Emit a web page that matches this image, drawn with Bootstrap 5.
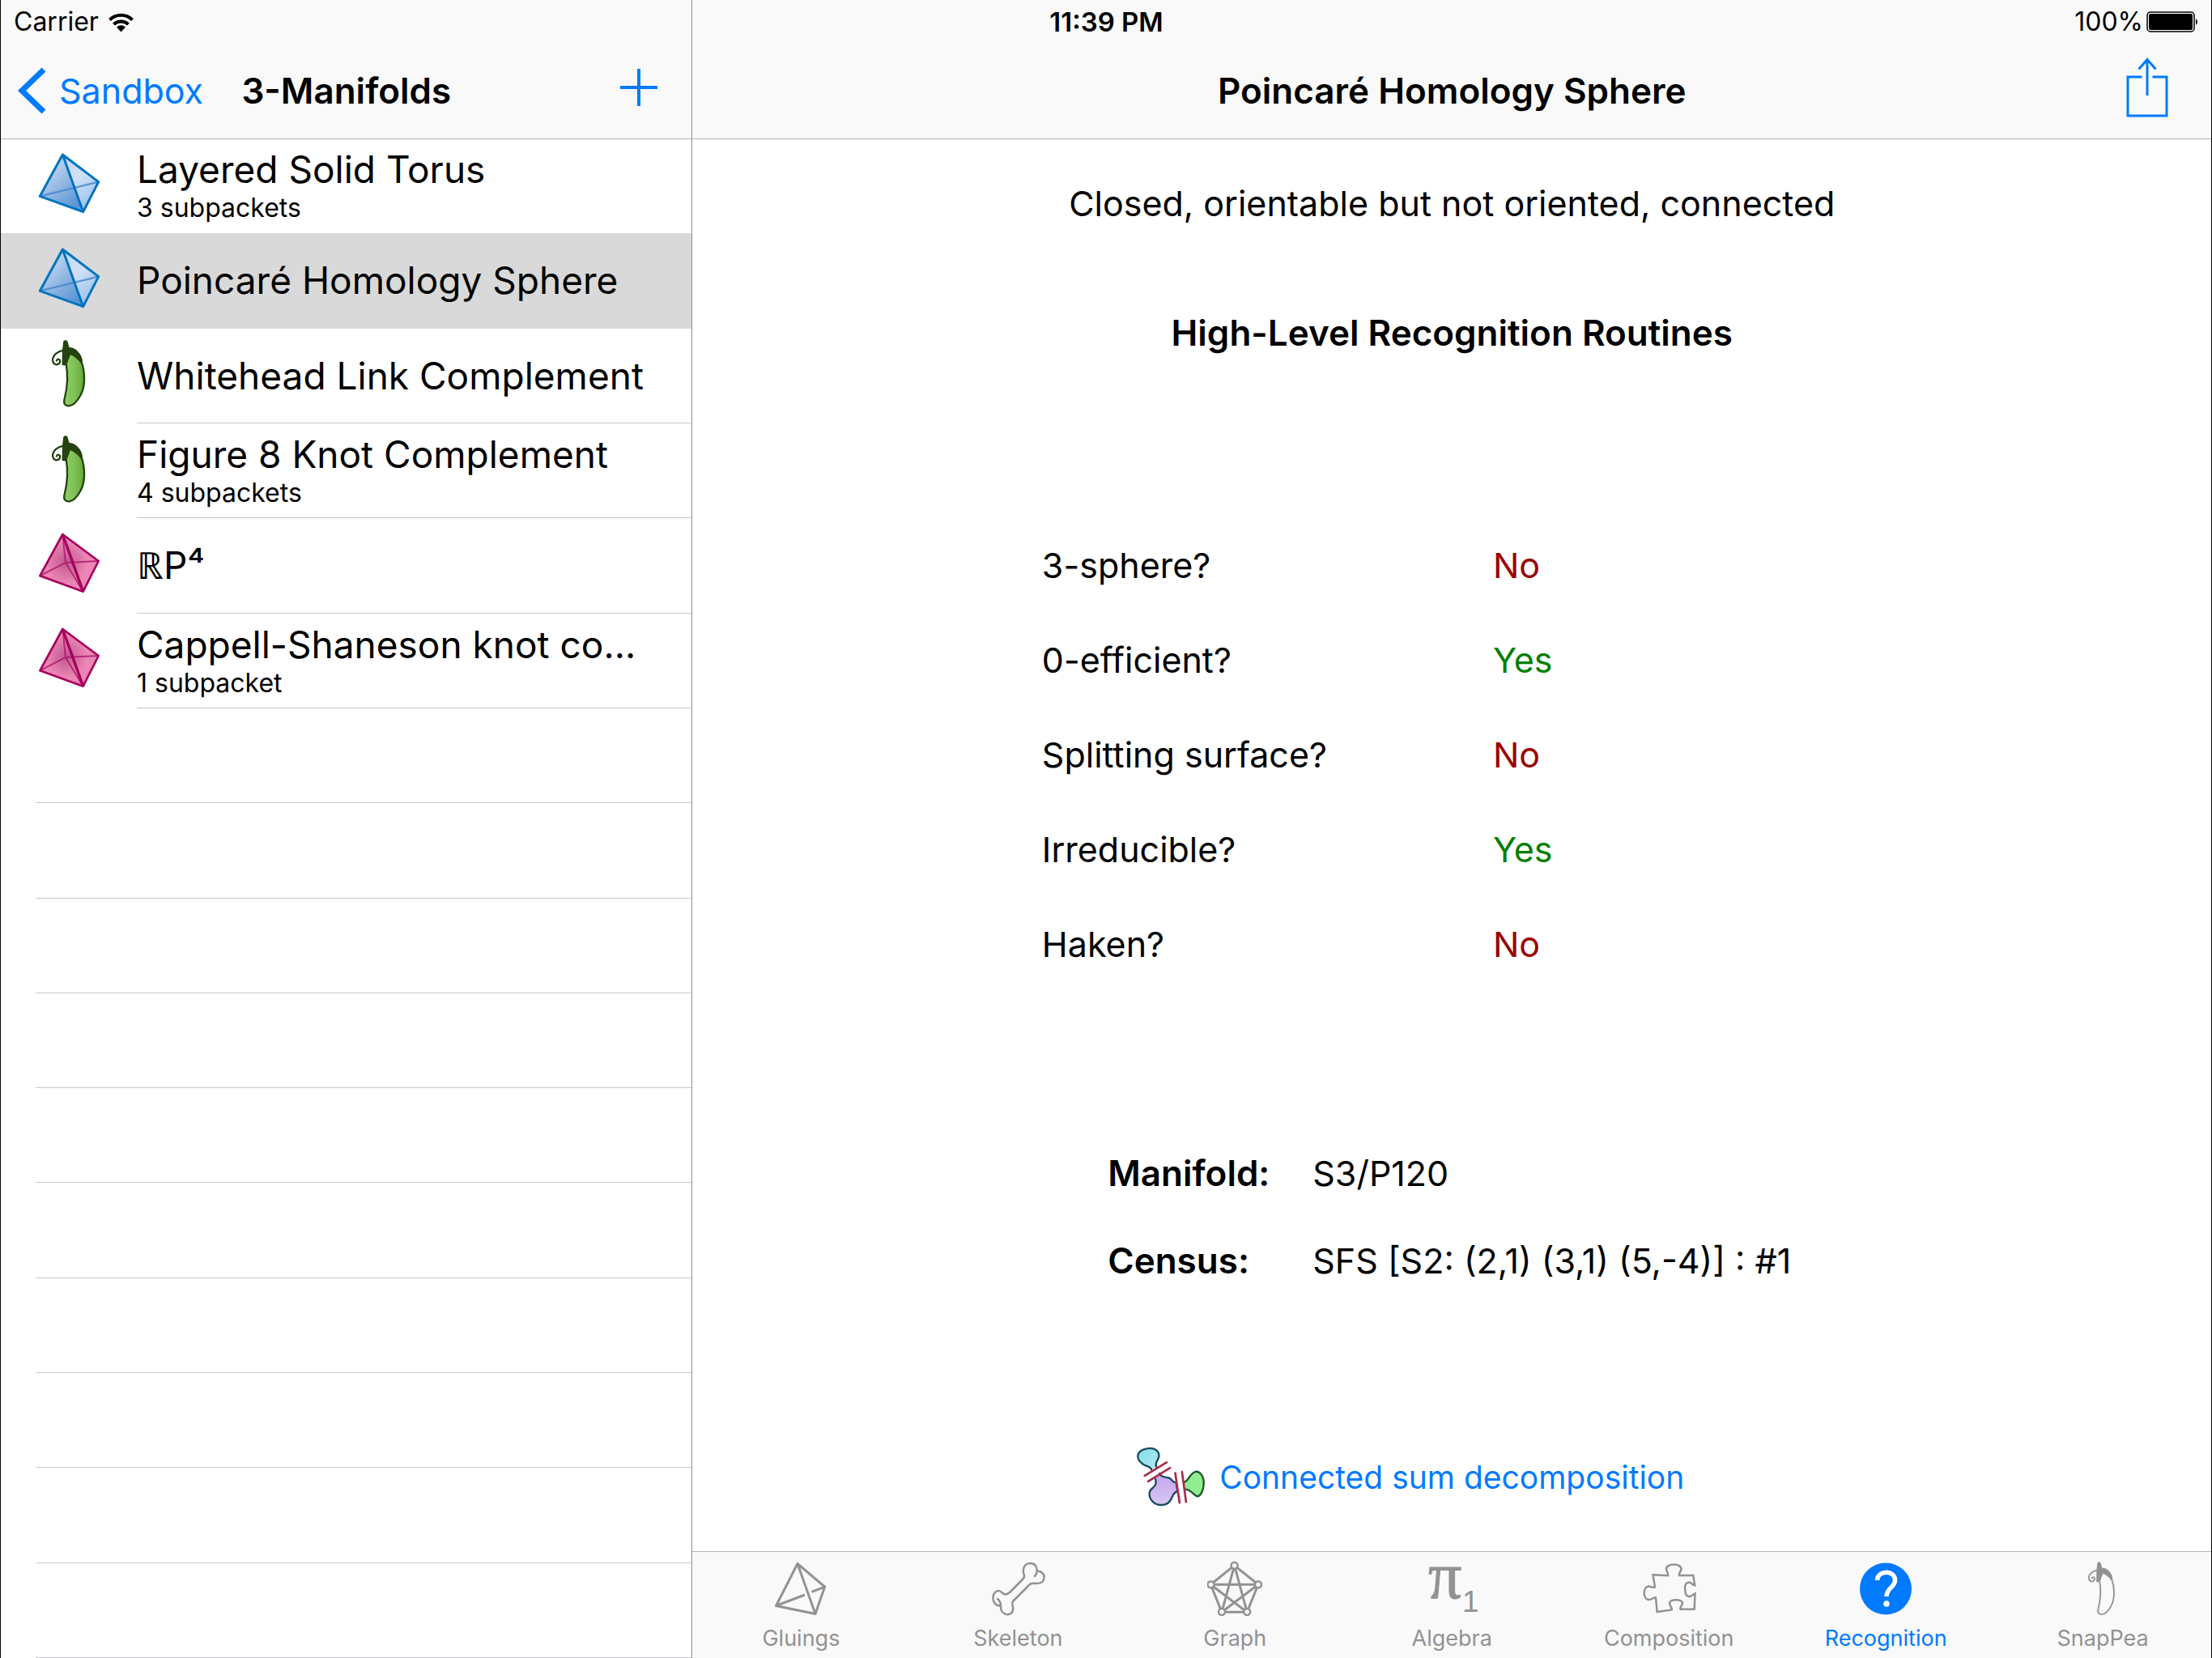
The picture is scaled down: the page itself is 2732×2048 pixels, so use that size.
<!DOCTYPE html>
<html lang="en">
<head>
<meta charset="utf-8">
<meta name="viewport" content="width=device-width, initial-scale=1">
<title>Poincaré Homology Sphere</title>
<link href="https://cdn.jsdelivr.net/npm/bootstrap@5.3.0/dist/css/bootstrap.min.css" rel="stylesheet">
<style>
  :root { --tint: #007aff; --bar: #f9f9f9; --bar-line: #b2b2b2; --rule: #c8c7cc; --dim: #929292; }
  body { font-family: Inter, "Liberation Sans", sans-serif; font-size: 43px; line-height: 52px; color: #000; background: #fff; }
  svg { display: block; flex: none; }
  a, .btn { color: var(--tint); text-decoration: none; }
  .app { border-left: 1px solid #000; border-right: 1px solid #000; }
  .status { font-size: 32px; line-height: 54px; padding: 0 15px 0 16px; }
  .status-left { gap: 12px; }
  .status-time { font-size: 33px; }
  .side { flex: 0 0 31.3%; min-width: 0; border-right: 1px solid #8e8e93; }
  .topbar { height: 172px; padding-top: 52px; background: var(--bar); border-bottom: 1px solid var(--bar-line); }
  .topbar h1, .topbar h2, .section-title { font-size: 44px; line-height: 52px; font-weight: 600; margin: 0; }
  .bar-btn { margin-right: 43px; }
  .packets { flex: 1 1 0; list-style: none; margin: -1px 0 0; padding: 0; }
  .packets > li { flex: 1 1 10px; min-height: 0; }
  .packet { color: #000; height: 100%; }
  .packet.chosen { background: #d9d9d9; }
  .packet-icon { flex: 0 0 168px; padding: 0 0 6px 2px; }
  .packet-text { min-width: 0; padding: 0 44px 0 0; border-bottom: 1px solid var(--rule); }
  .plain .packet-text { border-color: transparent; }
  .packet-name { font-size: 46px; line-height: 56px; }
  .packet-sub { font-size: 32px; line-height: 40px; }
  .vacant { margin-left: 43px; border-bottom: 1px solid var(--rule); }
  .summary { padding-top: 53px; }
  .section-title { margin-top: 108px; }
  .verdicts { width: 54%; margin-top: 202px; }
  .verdicts th, .verdicts td { height: 117px; padding: 0; font-weight: 400; vertical-align: middle; }
  .verdicts th { width: 55%; }
  .is-no { color: #990000; }
  .is-yes { color: #008000; }
  .names { margin: 171px 0 0; padding-right: 6px; display: grid; grid-template-columns: 253px auto; grid-auto-rows: 108px; align-items: center; }
  .names dt { font-size: 44px; font-weight: 600; }
  .names dd { margin: 0; }
  .decompose { margin-top: 175px; font-size: 39px; }
  .tabs { background: var(--bar); border-top: 1px solid var(--bar-line); height: 132px; }
  .tabs a { color: var(--dim); font-size: 27px; line-height: 36px; padding: 11px 0 0; gap: 10px; }
  .tabs a.active { color: var(--tint); }
</style>
</head>
<body>
<svg width="0" height="0" class="position-absolute" aria-hidden="true">
  <defs>
    <linearGradient id="blueL" x1="0" y1="0" x2=".7" y2="1"><stop offset=".2" stop-color="#c6d9f3"/><stop offset="1" stop-color="#5a93d2"/></linearGradient>
    <linearGradient id="blueR" x1="0" y1="0" x2=".5" y2="1"><stop offset="0" stop-color="#c3d8f3"/><stop offset=".5" stop-color="#cfe0f7"/><stop offset="1" stop-color="#9dc3ee"/></linearGradient>
    <radialGradient id="pinkG" gradientUnits="userSpaceOnUse" cx="158" cy="165" r="100"><stop offset="0" stop-color="#c0578f"/><stop offset=".8" stop-color="#ec87b5"/></radialGradient>
    <linearGradient id="pod" x1="0" x2="1"><stop offset="0" stop-color="#8fd067"/><stop offset=".5" stop-color="#7fc257"/><stop offset="1" stop-color="#65a535"/></linearGradient>
    <linearGradient id="cyanG" x1="0" x2="1" y2="1"><stop offset="0" stop-color="#7fe0ee"/><stop offset="1" stop-color="#b5e6ec"/></linearGradient>
    <linearGradient id="violetG" x2="0" y2="1"><stop offset="0" stop-color="#c3a5ee"/><stop offset="1" stop-color="#d9c6f3"/></linearGradient>
    <symbol id="tri3" viewBox="50 50 240 240">
      <path d="M144 62 60 216 220 274z" fill="url(#blueL)"/>
      <path d="M144 62 277 163 220 274z" fill="url(#blueR)"/>
      <path d="M60 216 277 163" stroke="#4486cb" stroke-width="7" opacity=".8"/>
      <path d="M144 62 60 216 220 274 277 163zL220 274" fill="none" stroke="#0074bf" stroke-width="9" stroke-linejoin="round"/>
    </symbol>
    <symbol id="tri4" viewBox="50 50 240 240">
      <path d="M144 62 60 216 220 274 277 163z" fill="url(#pinkG)"/>
      <path d="M144 62 155 167 60 216M155 167 220 274M155 167 277 161" fill="none" stroke="#a80f66" stroke-width="6" opacity=".75"/>
      <path d="M144 62 60 216 220 274 277 161z" fill="none" stroke="#a6005f" stroke-width="8" stroke-linejoin="round"/>
      <path d="M144 62 220 274" stroke="#a6005f" stroke-width="10"/>
    </symbol>
    <symbol id="pea" viewBox="97 54 136 258">
      <path d="M150 145C158 190 156 232 145 275C138 300 150 306 162 305C180 304 193 286 205 264C222 232 222 180 207 138L165 105z" fill="var(--pod-fill)" stroke="currentColor" stroke-width="7"/>
      <path d="M140 64Q148 54 156 64L162 86Q178 86 191 98Q213 120 211 140L205 146Q190 120 166 114L152 152Q144 156 135 152L136 98z" fill="currentColor"/>
      <path d="M140 97Q106 105 100 130Q100 150 115 151Q130 148 127 134Q119 126 115 136" fill="none" stroke="currentColor" stroke-width="7" stroke-linecap="round"/>
    </symbol>
  </defs>
</svg>

<div class="app min-vh-100 d-flex position-relative">
  <div class="status position-absolute top-0 start-0 end-0 d-flex align-items-center">
    <div class="status-left col d-flex align-items-center">
      <span>Carrier</span>
      <svg width="31" height="25" viewBox="0 0 31 25" fill="none" stroke="#000" stroke-width="4" role="img" aria-label="Wi-Fi"><path d="M1.500 9.500a20 20 0 0 1 28 0M6.500 15a13 13 0 0 1 18 0"/><path d="M10 18.500a8 8 0 0 1 11 0L15.500 24.500z" fill="#000" stroke="none"/></svg>
    </div>
    <div class="status-time fw-semibold">11:39 PM</div>
    <div class="col d-flex align-items-center justify-content-end gap-1">
      <span>100%</span>
      <svg width="65" height="26" viewBox="0 0 65 26" role="img" aria-label="Battery full"><rect x="1" y="1" width="58" height="24" rx="4" fill="none" stroke="#000" stroke-width="1.500"/><rect x="3" y="3" width="54" height="20" rx="2"/><path d="M61 9q4 4 0 8z"/></svg>
    </div>
  </div>

  <aside class="side d-flex flex-column">
    <header class="topbar d-flex align-items-center">
      <div class="col d-flex"><a href="#" class="d-flex align-items-center"><svg width="72" height="58" viewBox="-22 0 72 58" fill="none" stroke="currentColor" stroke-width="7"><path d="M31 3 4 29 31 55"/></svg>Sandbox</a></div>
      <h2>3-Manifolds</h2>
      <div class="col d-flex justify-content-end"><button type="button" class="bar-btn btn border-0 p-0 pb-2" aria-label="Add packet"><svg width="46" height="46" viewBox="0 0 46 46" stroke="currentColor" stroke-width="4"><path d="M23 0V46M0 23H46"/></svg></button></div>
    </header>
    <ul class="packets d-flex flex-column">
      <li><a href="#" class="packet plain d-flex"><span class="packet-icon d-flex align-items-center justify-content-center"><svg width="80" height="80"><use href="#tri3"/></svg></span><span class="packet-text flex-fill d-flex flex-column justify-content-center"><span class="packet-name text-truncate">Layered Solid Torus</span><span class="packet-sub">3 subpackets</span></span></a></li>
      <li><a href="#" class="packet plain chosen d-flex" aria-current="true"><span class="packet-icon d-flex align-items-center justify-content-center"><svg width="80" height="80"><use href="#tri3"/></svg></span><span class="packet-text flex-fill d-flex flex-column justify-content-center"><span class="packet-name text-truncate">Poincaré Homology Sphere</span></span></a></li>
      <li><a href="#" class="packet d-flex"><span class="packet-icon d-flex align-items-center justify-content-center"><svg width="45" height="86" style="--pod-fill:url(#pod);color:#25430f"><use href="#pea"/></svg></span><span class="packet-text flex-fill d-flex flex-column justify-content-center"><span class="packet-name text-truncate">Whitehead Link Complement</span></span></a></li>
      <li><a href="#" class="packet d-flex"><span class="packet-icon d-flex align-items-center justify-content-center"><svg width="45" height="86" style="--pod-fill:url(#pod);color:#25430f"><use href="#pea"/></svg></span><span class="packet-text flex-fill d-flex flex-column justify-content-center"><span class="packet-name text-truncate">Figure 8 Knot Complement</span><span class="packet-sub">4 subpackets</span></span></a></li>
      <li><a href="#" class="packet d-flex"><span class="packet-icon d-flex align-items-center justify-content-center"><svg width="80" height="80"><use href="#tri4"/></svg></span><span class="packet-text flex-fill d-flex flex-column justify-content-center"><span class="packet-name text-truncate">ℝP⁴</span></span></a></li>
      <li><a href="#" class="packet d-flex"><span class="packet-icon d-flex align-items-center justify-content-center"><svg width="80" height="80"><use href="#tri4"/></svg></span><span class="packet-text flex-fill d-flex flex-column justify-content-center"><span class="packet-name text-truncate">Cappell-Shaneson knot co…</span><span class="packet-sub">1 subpacket</span></span></a></li>
      <li class="vacant"></li><li class="vacant"></li><li class="vacant"></li><li class="vacant"></li><li class="vacant"></li>
      <li class="vacant"></li><li class="vacant"></li><li class="vacant"></li><li class="vacant"></li><li class="vacant"></li>
    </ul>
  </aside>

  <div class="col d-flex flex-column">
    <header class="topbar d-flex align-items-center">
      <div class="col"></div>
      <h1>Poincaré Homology Sphere</h1>
      <div class="col d-flex justify-content-end"><button type="button" class="bar-btn btn border-0 p-0 pb-2" aria-label="Share"><svg width="62" height="74" viewBox="0 0 62 74" fill="none" stroke="currentColor" stroke-width="3"><path d="M19.500 24H2V72H50V24H32.500M26 2V47M15.500 14.500 26 2.500 36.500 14.500"/></svg></button></div>
    </header>

    <main class="flex-grow-1 d-flex flex-column align-items-center">
      <div class="summary">Closed, orientable but not oriented, connected</div>
      <h2 class="section-title">High-Level Recognition Routines</h2>
      <table class="verdicts">
        <tbody>
          <tr><th scope="row">3-sphere?</th><td class="is-no">No</td></tr>
          <tr><th scope="row">0-efficient?</th><td class="is-yes">Yes</td></tr>
          <tr><th scope="row">Splitting surface?</th><td class="is-no">No</td></tr>
          <tr><th scope="row">Irreducible?</th><td class="is-yes">Yes</td></tr>
          <tr><th scope="row">Haken?</th><td class="is-no">No</td></tr>
        </tbody>
      </table>
      <dl class="names">
        <dt>Manifold:</dt><dd>S3/P120</dd>
        <dt>Census:</dt><dd>SFS [S2: (2,1) (3,1) (5,-4)] : #1</dd>
      </dl>
      <div class="decompose d-flex align-items-center align-self-stretch">
        <div class="col d-flex justify-content-end pe-3">
          <svg width="87" height="77" viewBox="65 48 260 230" fill="none" stroke-width="7" stroke-linecap="round">
            <path d="M122 135C118 122 100 124 88 113C66 98 66 72 92 62C122 50 150 60 150 84C150 100 134 105 140 125" fill="url(#cyanG)" stroke="#1c4a5e"/>
            <path d="M152 150C160 166 178 162 189 167C200 173 200 184 214 184L218 216C200 220 202 236 190 252C178 268 152 270 135 260C110 244 110 216 125 205C144 190 138 180 137 170" fill="url(#violetG)" stroke="#1c4a5e"/>
            <path d="M243 182C262 175 262 150 285 143C305 142 317 165 315 190C314 215 302 235 291 234C275 230 270 208 246 208" fill="#90ee90" stroke="#1f5a2a"/>
            <path d="M97 158 178 109M110 179 191 129M210 148 226 258M235 144 250 255" stroke="#a92c47" stroke-width="8"/>
          </svg>
        </div>
        <a href="#">Connected sum decomposition</a>
        <div class="col ps-3"></div>
      </div>
    </main>

    <nav class="tabs nav nav-justified flex-nowrap" aria-label="Viewers">
      <a href="#" class="col d-flex flex-column align-items-center"><svg width="68" height="68" viewBox="-2 0 68 68" fill="none" stroke="currentColor" stroke-width="3" stroke-linejoin="round"><path d="M28 3.500 1.500 55.500 50 65.500 61.700 32zL50 65.500M1.500 55.500 37 42M45.500 38.300 61.700 32"/></svg>Gluings</a>
      <a href="#" class="col d-flex flex-column align-items-center"><svg width="68" height="68" viewBox="-2 0 68 68" fill="none" stroke="currentColor" stroke-width="2.500" stroke-linecap="round" stroke-linejoin="round"><path d="M40 18C37 10 40 3 48 3C54 3 56 8 55.500 13C61 12 65 16 64.500 21C64 27 60 28 55 28C48 27 46 29 43 33L26 50C24 53 27 57 26 61C25 66 20 67 16 65.500C11 63 11 59 11 55.500C5 56 1 51 1.500 45C2 39 6 36 10 37.500C13 39 14 41.500 17 41.500C20 41 22 39 24 37L37 24C39 22 40.500 20 40 18zM55.500 13Q56 16 53 19M11 55.500Q11 50 7 47"/></svg>Skeleton</a>
      <a href="#" class="col d-flex flex-column align-items-center"><svg width="68" height="68" viewBox="0 0 68 68" fill="none" stroke="currentColor" stroke-width="3"><path d="M33.600 5.700 4.300 29.300 18 63.300H49.200L63 29.300zL18 63.300 63 29.300H4.300L49.200 63.300z"/><g fill="#f9f9f9" stroke-width="2.500"><circle cx="33.600" cy="5.700" r="4"/><circle cx="4.500" cy="29.300" r="4"/><circle cx="63" cy="29.300" r="4"/><circle cx="18" cy="63" r="4"/><circle cx="49.200" cy="63" r="4"/></g></svg>Graph</a>
      <a href="#" class="col d-flex flex-column align-items-center"><svg class="overflow-visible" width="68" height="68" viewBox="0 0 68 68" fill="currentColor"><text x="5" y="46" font-family="Liberation Serif, serif" font-size="82" stroke="currentColor" stroke-width="1">π</text><text x="47" y="63" font-family="Liberation Sans, sans-serif" font-size="37">1</text></svg>Algebra</a>
      <a href="#" class="col d-flex flex-column align-items-center"><svg width="68" height="68" viewBox="0 0 68 68" fill="none" stroke="currentColor" stroke-width="2.500"><path d="M14.500 17.300 33 18.300C34 15 31 13 31 10C31 2.500 49.500 2.500 49.500 10C49.500 13 46 15 47 18H64.300L66.300 30.300C63 30 62 26.500 59 26.500C53 27 54 34 54.500 38C55 45 61 45 63 42.500L66.500 40.500 65.700 59.700H48.500C47 57 51.500 55 51 52C50 47 36 47 35 52C34.500 55 38.500 57 37.700 60.500L19.700 63 18 45.300C15 45 13 48.500 9 48C2 47 2 33 8.500 31.500C12 31 13 34 17 32.300z"/></svg>Composition</a>
      <a href="#" class="active col d-flex flex-column align-items-center" aria-current="page"><svg width="68" height="68" viewBox="0 0 68 68"><circle cx="34" cy="34.500" r="32" fill="currentColor"/><path d="M23.500 24C24 11 45.500 11 45.500 24C45.500 33 35 33 35 44" fill="none" stroke="#fff" stroke-width="5.500"/><circle cx="35" cy="53" r="3.800" fill="#fff"/></svg>Recognition</a>
      <a href="#" class="col d-flex flex-column align-items-center"><svg width="68" height="68" style="--pod-fill:none"><use href="#pea"/></svg>SnapPea</a>
    </nav>
  </div>
</div>
<script src="https://cdn.jsdelivr.net/npm/bootstrap@5.3.0/dist/js/bootstrap.bundle.min.js"></script>
</body>
</html>
